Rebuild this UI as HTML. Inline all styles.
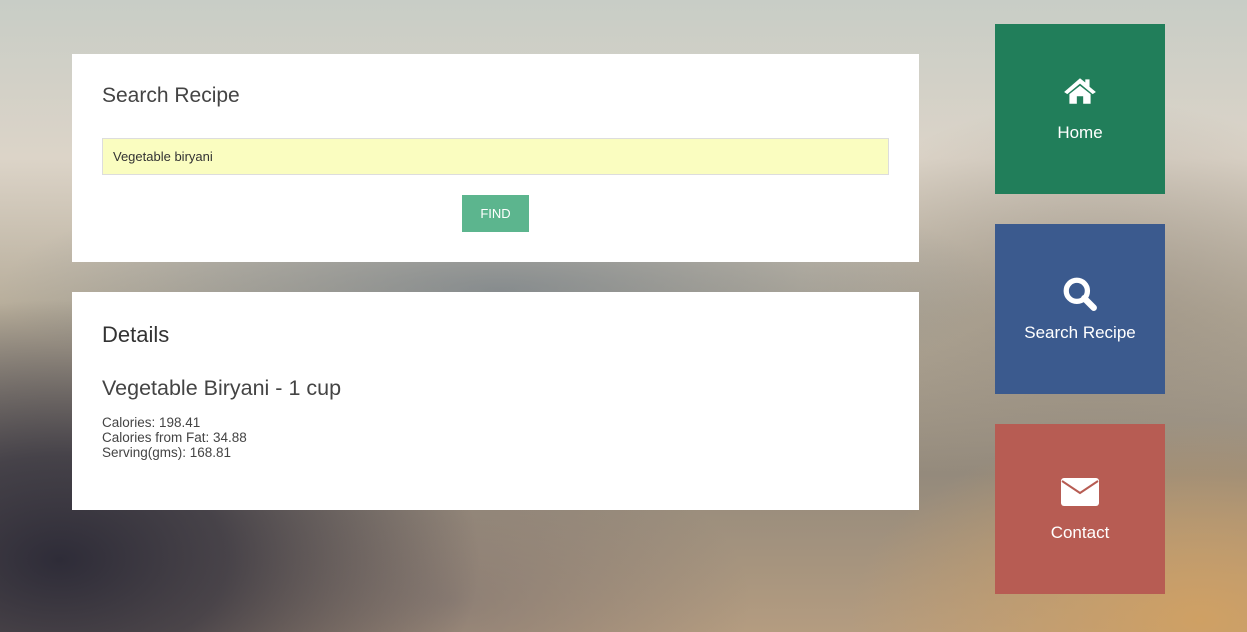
<!DOCTYPE html>
<html><head><meta charset="utf-8"><style>
html,body{margin:0;width:1247px;height:632px;overflow:hidden;font-family:"Liberation Sans",sans-serif;}
body{position:relative;background:
radial-gradient(ellipse 420px 260px at 60px 560px,#2e2c38 0%,rgba(50,48,60,.8) 40%,rgba(60,60,70,0) 100%),
radial-gradient(ellipse 300px 160px at 450px 600px,rgba(120,110,110,.6),rgba(120,110,110,0)),
radial-gradient(ellipse 350px 200px at 1200px 620px,#cfa064,rgba(207,160,100,0)),
radial-gradient(ellipse 500px 120px at 500px 290px,rgba(100,115,130,.6),rgba(110,120,130,0)),
radial-gradient(ellipse 300px 200px at 1100px 300px,rgba(140,130,120,.5),rgba(140,130,120,0)),
linear-gradient(180deg,#c8cdc6 0%,#dcd4c8 25%,#b5ab98 50%,#948a7c 75%,#b49c80 100%);}
.card{position:absolute;left:72px;width:847px;background:#fff;}
.tile{position:absolute;left:995px;width:170px;height:170px;color:#fff;text-align:center;font-size:17px;}
.tile svg{position:absolute;left:50%;transform:translateX(-50%);}
.tile span{position:absolute;left:0;right:0;}
</style></head><body>
<div class="card" style="top:54px;height:208px">
 <div style="position:absolute;left:30px;top:30px;font-size:21px;color:#444">Search Recipe</div>
 <div style="position:absolute;left:30px;top:84px;width:787px;height:37px;background:#fafdc0;border:1px solid #ddd;font-size:13px;color:#333;line-height:35px;padding-left:10px;box-sizing:border-box">Vegetable biryani</div>
 <div style="position:absolute;left:390px;top:141px;width:67px;height:37px;background:#5cb58e;color:#fff;font-size:13px;line-height:37px;text-align:center">FIND</div>
</div>
<div class="card" style="top:292px;height:218px;color:#444">
 <div style="position:absolute;left:30px;top:30px;font-size:22px;color:#333">Details</div>
 <div style="position:absolute;left:30px;top:84px;font-size:21.5px">Vegetable Biryani - 1 cup</div>
 <div style="position:absolute;left:30px;top:123px;font-size:13.5px;line-height:15px">Calories: 198.41<br>Calories from Fat: 34.88<br>Serving(gms): 168.81</div>
</div>
<div class="tile" style="top:24px;background:#217e5a">
 <svg style="top:52px" width="36" height="30" viewBox="0 0 34 28"><path d="M17 2 L2 15 L5 17 L17 7 L29 17 L32 15 L26 10 L26 3 L22 3 L22 6 Z" fill="#fff"/><path d="M7 17 L17 9 L27 17 L27 26 L20 26 L20 19 L14 19 L14 26 L7 26 Z" fill="#fff"/></svg>
 <span style="top:99px">Home</span>
</div>
<div class="tile" style="top:224px;background:#3b5a8e">
 <svg style="top:52px" width="36" height="36" viewBox="0 0 34 34"><circle cx="14" cy="14" r="10" fill="none" stroke="#fff" stroke-width="5"/><path d="M21 21 L30 30" stroke="#fff" stroke-width="6" stroke-linecap="round"/></svg>
 <span style="top:99px">Search Recipe</span>
</div>
<div class="tile" style="top:424px;background:#b75c53">
 <svg style="top:54px" width="38" height="28" viewBox="0 0 38 28"><rect x="0" y="0" width="38" height="28" rx="3" fill="#fff"/><path d="M1 3 L19 15 L37 3" fill="none" stroke="#b75c53" stroke-width="2"/></svg>
 <span style="top:99px">Contact</span>
</div>
</body></html>
